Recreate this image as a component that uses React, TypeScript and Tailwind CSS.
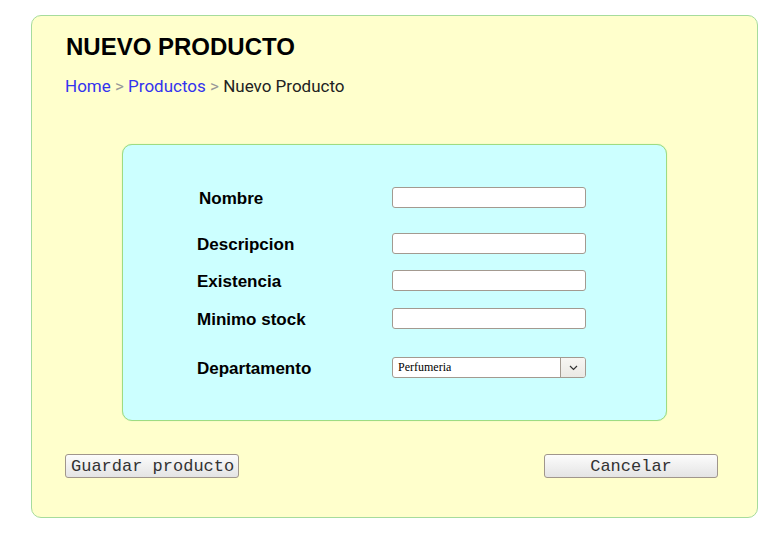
import React from "react";

function Field({ label, className = "", labelClass = "" }: { label: string; className?: string; labelClass?: string }) {
  return (
    <div className={`flex items-center h-[21px] ${className}`}>
      <div className={`w-[195px] text-[17px] leading-[21px] pt-[2px] font-bold text-black ${labelClass}`}>
        {label}
      </div>
      <div className="w-[194px] h-[21px] bg-white border border-[#a39a90] rounded-[3px]" />
    </div>
  );
}

export default function App() {
  return (
    <div className="bg-white w-[779px] h-[540px] pt-[15px] pl-[31px]" style={{ fontFamily: '"Liberation Sans", Arial, sans-serif' }}>
      <div className="w-[727px] h-[503px] bg-[#ffffcc] border border-[#a6dc9c] rounded-[10px] flex flex-col">
        <h1 className="mt-[17px] ml-[34px] text-[24px] leading-[28px] font-bold text-black">NUEVO PRODUCTO</h1>
        <div className="mt-[15px] ml-[33px] text-[17px] leading-[20px] text-[#222]" style={{ fontFamily: 'Roboto, "Liberation Sans", sans-serif' }}>
          <span className="text-[#3333ee]">Home</span>
          <span className="text-[#999]"> &gt; </span>
          <span className="text-[#3333ee]">Productos</span>
          <span className="text-[#999]"> &gt; </span>
          <span>Nuevo Producto</span>
        </div>
        <div className="mt-[48px] ml-[90px] w-[545px] h-[277px] bg-[#ccffff] border border-[#9edc82] rounded-[10px] shadow-[0_0_1px_#b5e6a0] pt-[42px] pl-[74px] flex flex-col">
          <Field label="Nombre" labelClass="pl-[2px]" />
          <Field label="Descripcion" className="mt-[25px]" />
          <Field label="Existencia" className="mt-[16px]" />
          <Field label="Minimo stock" className="mt-[17px]" />
          <div className="flex items-center h-[21px] mt-[28px]">
            <div className="w-[195px] text-[17px] leading-[21px] pt-[2px] font-bold text-black">Departamento</div>
            <div className="w-[194px] h-[21px] bg-white border border-[#a39a90] rounded-[3px] flex items-stretch overflow-hidden">
              <div className="flex-1 pl-[5px] text-[12px] leading-[19px] text-black" style={{ fontFamily: '"Liberation Serif", "Times New Roman", serif' }}>
                Perfumeria
              </div>
              <div className="w-[25px] border-l border-[#a39a90] bg-gradient-to-b from-[#f7f6f3] to-[#ebe9e4] flex items-center justify-center">
                <svg width="9" height="6" viewBox="0 0 9 6">
                  <path d="M1 1 L4.5 4.5 L8 1" fill="none" stroke="#333" strokeWidth="1.2" />
                </svg>
              </div>
            </div>
          </div>
        </div>
        <div className="mt-[33px] ml-[33px] mr-[39px] flex justify-between" style={{ fontFamily: '"Liberation Mono", "Courier New", monospace' }}>
          <div className="w-[174px] h-[24px] border border-[#a0968c] rounded-[3px] bg-gradient-to-b from-[#fcfcfc] to-[#e4e4e4] text-[17px] leading-[23px] text-[#333] pl-[5px]">
            Guardar producto
          </div>
          <div className="w-[174px] h-[24px] border border-[#a0968c] rounded-[3px] bg-gradient-to-b from-[#fcfcfc] to-[#e4e4e4] text-[17px] leading-[23px] text-[#333] text-center">
            Cancelar
          </div>
        </div>
      </div>
    </div>
  );
}
